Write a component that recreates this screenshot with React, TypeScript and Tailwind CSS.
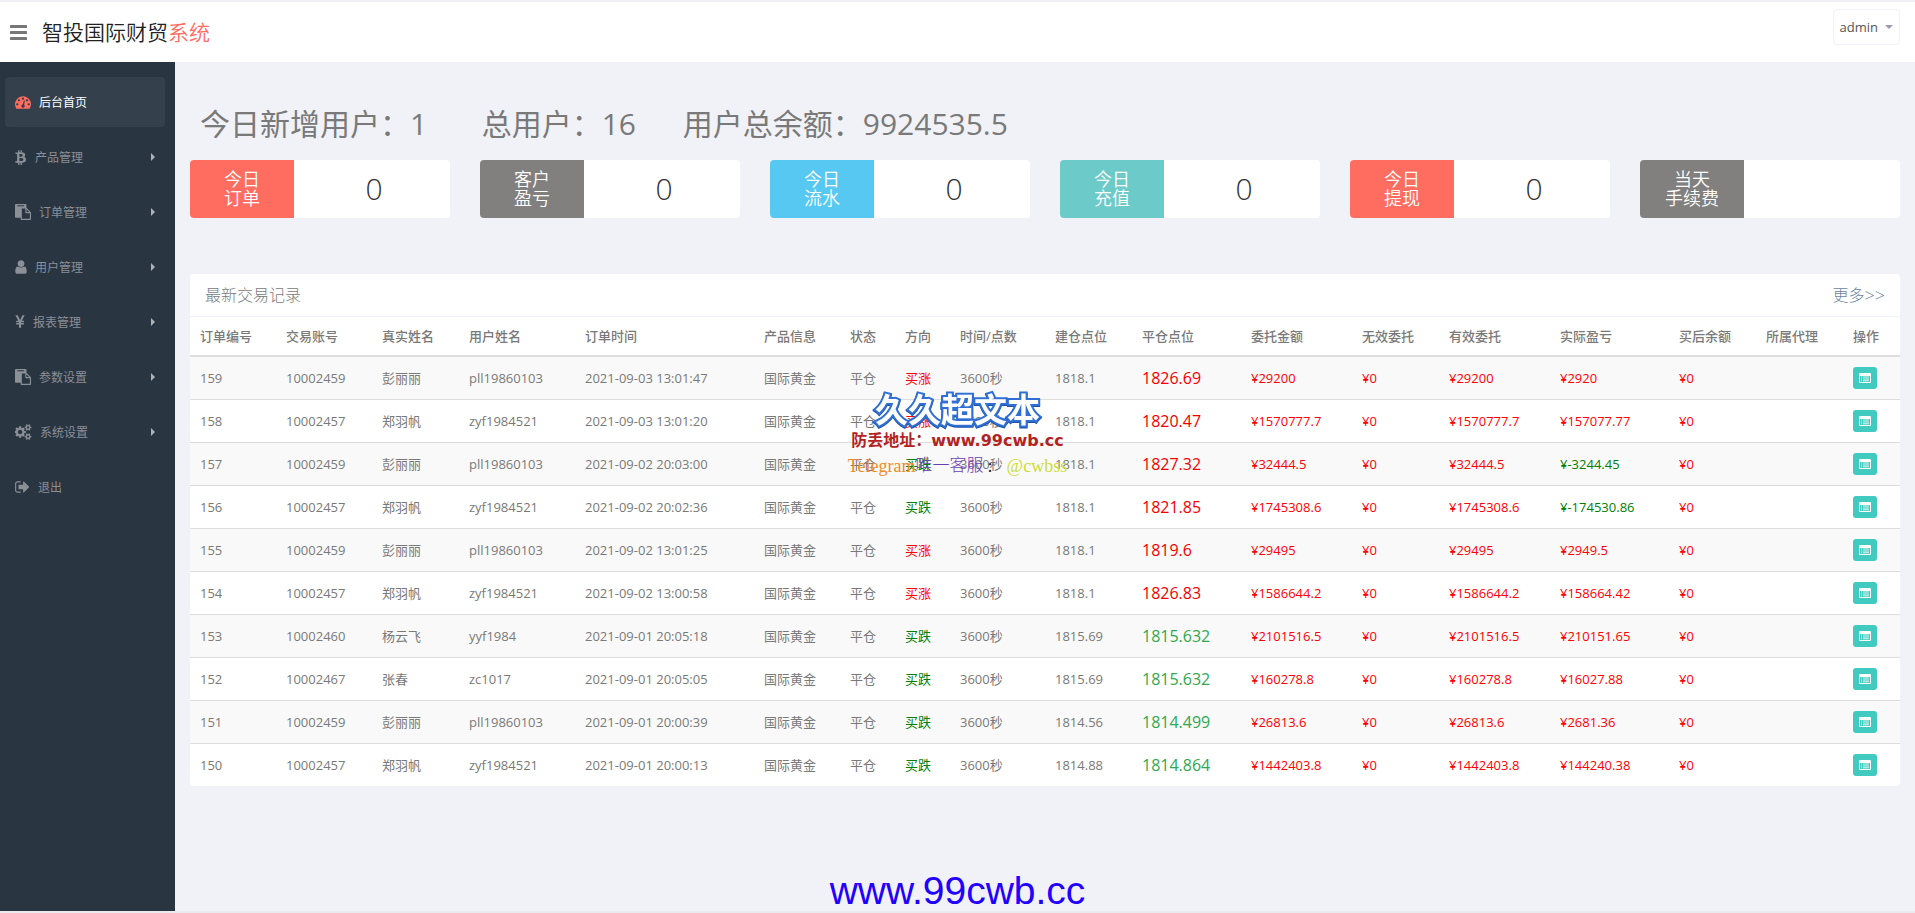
import React from "react";

type IconDef = { box: string; width: string; d: string };

const ICONS: Record<string, IconDef> = {
  dashboard: {
    box: "0 0 1792 1792",
    width: "w-4",
    d: "M384 1152q0-53-37.5-90.5t-90.5-37.5-90.5 37.5-37.5 90.5 37.5 90.5 90.5 37.5 90.5-37.5 37.5-90.5zm192-448q0-53-37.5-90.5t-90.5-37.5-90.5 37.5-37.5 90.5 37.5 90.5 90.5 37.5 90.5-37.5 37.5-90.5zm428 481l101-382q6-26-7.5-48.5t-38.5-29.5-48 6.5-30 39.5l-101 382q-60 5-107 43.5t-63 98.5q-20 77 20 146t117 89 146-20 89-117q16-60-6-117t-72-91zm660-33q0-53-37.5-90.5t-90.5-37.5-90.5 37.5-37.5 90.5 37.5 90.5 90.5 37.5 90.5-37.5 37.5-90.5zm-640-640q0-53-37.5-90.5t-90.5-37.5-90.5 37.5-37.5 90.5 37.5 90.5 90.5 37.5 90.5-37.5 37.5-90.5zm448 192q0-53-37.5-90.5t-90.5-37.5-90.5 37.5-37.5 90.5 37.5 90.5 90.5 37.5 90.5-37.5 37.5-90.5zm320 448q0 261-141 483-19 29-54 29h-1402q-35 0-54-29-141-221-141-483 0-182 71-348t191-286 286-191 348-71 348 71 286 191 191 286 71 348z",
  },
  bitcoin: {
    box: "56 0 1280 1792",
    width: "w-3",
    d: "M1167 640q18 182-131 258 117 28 175 103t45 214q-7 71-32.5 125t-64.5 89-97 58.5-121.5 34.5-145.5 15v255h-154v-251q-80 0-122-1v252h-154v-255q-18 0-54-.5t-55-.5h-200l31-183h111q50 0 58-51v-402h16q-6-1-16-1v-287q-13-68-89-68h-111v-164l212 1q64 0 97-1v-252h154v247q82-2 122-2v-245h154v252q79 7 140 22.5t113 45 82.5 78 36.5 114.5zm-215 545q0-36-15-64t-37-46-57.5-30.5-65.5-18.5-74-9-69-3-64.5 1-47.5 1v338q8 0 37 .5t48 .5 53-1.5 58.5-4 57-8.5 55.5-14 47.5-21 39.5-30 24.5-40 9.5-51zm-71-476q0-33-12.5-58.5t-30.5-42-48-28-55-16.5-61.5-8-58-2.5-54 1-39.5.5v307q5 0 34.5.5t46.5 0 50-2 55-5.5 51.5-11 48.5-18.5 37-27 27-38.5 9-51z",
  },
  paste: {
    box: "0 0 1792 1792",
    width: "w-4",
    d: "M768 1664h896v-640h-416q-40 0-68-28t-28-68v-416h-384v1152zm256-1440v-64q0-13-9.5-22.5t-22.5-9.5h-704q-13 0-22.5 9.5t-9.5 22.5v64q0 13 9.5 22.5t22.5 9.5h704q13 0 22.5-9.5t9.5-22.5zm256 672h299l-299-299v299zm512 128v672q0 40-28 68t-68 28h-960q-40 0-68-28t-28-68v-160h-544q-40 0-68-28t-28-68v-1344q0-40 28-68t68-28h1088q40 0 68 28t28 68v328q21 13 36 28l408 408q28 28 48 76t20 88z",
  },
  user: {
    box: "256 0 1280 1792",
    width: "w-3",
    d: "M1536 1399q0 109-62.5 187t-150.5 78h-854q-88 0-150.5-78t-62.5-187q0-85 8.5-160.5t31.5-152 58.5-131 94-89 134.5-34.5q131 128 313 128t313-128q76 0 134.5 34.5t94 89 58.5 131 31.5 152 8.5 160.5zm-256-887q0 159-112.5 271.5t-271.5 112.5-271.5-112.5-112.5-271.5 112.5-271.5 271.5-112.5 271.5 112.5 112.5 271.5z",
  },
  yen: {
    box: "378 0 1034 1792",
    width: "w-[10px]",
    d: "M985.5 1536h-172q-13 0-22.5-9t-9.5-23v-330h-288q-13 0-22.5-9t-9.5-23v-103q0-13 9.5-22.5t22.5-9.5h288v-85h-288q-13 0-22.5-9t-9.5-23v-104q0-13 9.5-22.5t22.5-9.5h214l-321-578q-8-16 0-32 10-16 28-16h194q19 0 29 18l215 425q19 38 56 125 10-24 30.5-68t27.5-61l191-420q8-19 29-19h191q17 0 27 16 9 14 1 31l-313 579h215q13 0 22.5 9.5t9.5 22.5v104q0 14-9.5 23t-22.5 9h-290v85h290q13 0 22.5 9.5t9.5 22.5v103q0 14-9.5 23t-22.5 9h-290v330q0 13-9.5 22.5t-22.5 9.5z",
  },
  cogs: {
    box: "0 0 1920 1792",
    width: "w-[17px]",
    d: "M832 896q0-106-75-181t-181-75-181 75-75 181 75 181 181 75 181-75 75-181zm768 512q0-52-38-90t-90-38-90 38-38 90q0 53 37.5 90.5t90.5 37.5 90.5-37.5 37.5-90.5zm0-1024q0-52-38-90t-90-38-90 38-38 90q0 53 37.5 90.5t90.5 37.5 90.5-37.5 37.5-90.5zm-384 421v185q0 10-7 19.5t-16 10.5l-155 24q-11 35-32 76 34 48 90 115 7 10 7 20 0 12-7 19-23 30-82.5 89.5t-78.5 59.5q-11 0-21-7l-115-90q-37 19-77 31-11 108-23 155-7 24-30 24h-186q-11 0-20-7.5t-10-17.5l-23-153q-34-10-75-31l-118 89q-7 7-20 7-11 0-21-8-144-133-144-160 0-9 7-19 10-14 41-53t47-61q-23-44-35-82l-152-24q-10-1-17-9.5t-7-19.5v-185q0-10 7-19.5t16-10.5l155-24q11-35 32-76-34-48-90-115-7-11-7-20 0-12 7-20 22-30 82-89t79-59q11 0 21 7l115 90q34-18 77-32 11-108 23-154 7-24 30-24h186q11 0 20 7.5t10 17.5l23 153q34 10 75 31l118-89q8-7 20-7 11 0 21 8 144 133 144 160 0 9-7 19-12 16-42 54t-45 60q23 48 34 82l152 23q10 2 17 10.5t7 19.5zm640 533v140q0 16-149 31-12 27-30 52 51 113 51 138 0 4-4 7-122 71-124 71-8 0-46-47t-52-68q-20 2-30 2t-30-2q-14 21-52 68t-46 47q-2 0-124-71-4-3-4-7 0-25 51-138-18-25-30-52-149-15-149-31v-140q0-16 149-31 13-29 30-52-51-113-51-138 0-4 4-7 4-2 35-20t59-34 30-16q8 0 46 46.5t52 67.5q20-2 30-2t30 2q51-71 92-112l6-2q4 0 124 70 4 3 4 7 0 25-51 138 17 23 30 52 149 15 149 31zm0-1024v140q0 16-149 31-12 27-30 52 51 113 51 138 0 4-4 7-122 71-124 71-8 0-46-47t-52-68q-20 2-30 2t-30-2q-14 21-52 68t-46 47q-2 0-124-71-4-3-4-7 0-25 51-138-18-25-30-52-149-15-149-31v-140q0-16 149-31 13-29 30-52-51-113-51-138 0-4 4-7 4-2 35-20t59-34 30-16q8 0 46 46.5t52 67.5q20-2 30-2t30 2q51-71 92-112l6-2q4 0 124 70 4 3 4 7 0 25-51 138 17 23 30 52 149 15 149 31z",
  },
  signOut: {
    box: "64 0 1664 1792",
    width: "w-[15px]",
    d: "M704 1440q0 4 1 20t.5 26.5-3 23.5-10 19.5-20.5 6.5h-320q-119 0-203.5-84.5t-84.5-203.5v-704q0-119 84.5-203.5t203.5-84.5h320q13 0 22.5 9.5t9.5 22.5q0 4 1 20t.5 26.5-3 23.5-10 19.5-20.5 6.5h-320q-66 0-113 47t-47 113v704q0 66 47 113t113 47h312l11.5 1 11.5 3 8 5.5 7 9 2 13.5zm928-544q0 26-19 45l-544 544q-19 19-45 19t-45-19-19-45v-288h-448q-26 0-45-19t-19-45v-384q0-26 19-45t45-19h448v-288q0-26 19-45t45-19 45 19l544 544q19 19 19 45z",
  },
};

function Icon({ name }: { name: string }) {
  const icon = ICONS[name];
  return (
    <svg viewBox={icon.box} className={`h-4 shrink-0 ${icon.width}`} fill="currentColor" aria-hidden="true">
      <path d={icon.d} />
    </svg>
  );
}

const MENU = [
  { icon: "dashboard", label: "后台首页", active: true, more: false },
  { icon: "bitcoin", label: "产品管理", active: false, more: true },
  { icon: "paste", label: "订单管理", active: false, more: true },
  { icon: "user", label: "用户管理", active: false, more: true },
  { icon: "yen", label: "报表管理", active: false, more: true },
  { icon: "paste", label: "参数设置", active: false, more: true },
  { icon: "cogs", label: "系统设置", active: false, more: true },
  { icon: "signOut", label: "退出", active: false, more: false },
];

const SUMMARY = ["今日新增用户：1", "总用户：16", "用户总余额：9924535.5"];

const CARDS = [
  { top: "今日", bottom: "订单", value: "0", color: "bg-[#ff6c60]" },
  { top: "客户", bottom: "盈亏", value: "0", color: "bg-[#81807e]" },
  { top: "今日", bottom: "流水", value: "0", color: "bg-[#57c8f2]" },
  { top: "今日", bottom: "充值", value: "0", color: "bg-[#6ccac9]" },
  { top: "今日", bottom: "提现", value: "0", color: "bg-[#ff6c60]" },
  { top: "当天", bottom: "手续费", value: "", color: "bg-[#81807e]" },
];

const COLUMNS = [
  { title: "订单编号", width: "w-[86px]" },
  { title: "交易账号", width: "w-[96px]" },
  { title: "真实姓名", width: "w-[87px]" },
  { title: "用户姓名", width: "w-[116px]" },
  { title: "订单时间", width: "w-[179px]" },
  { title: "产品信息", width: "w-[86px]" },
  { title: "状态", width: "w-[55px]" },
  { title: "方向", width: "w-[55px]" },
  { title: "时间/点数", width: "w-[95px]" },
  { title: "建仓点位", width: "w-[87px]" },
  { title: "平仓点位", width: "w-[109px]" },
  { title: "委托金额", width: "w-[111px]" },
  { title: "无效委托", width: "w-[87px]" },
  { title: "有效委托", width: "w-[111px]" },
  { title: "实际盈亏", width: "w-[119px]" },
  { title: "买后余额", width: "w-[87px]" },
  { title: "所属代理", width: "w-[87px]" },
  { title: "操作", width: "w-[57px]" },
];

type Order = {
  id: string;
  account: string;
  name: string;
  user: string;
  time: string;
  up: boolean;
  open: string;
  close: string;
  rose: boolean;
  amount: string;
  profit: string;
};

const ORDERS: Order[] = [
  { id: "159", account: "10002459", name: "彭丽丽", user: "pll19860103", time: "2021-09-03 13:01:47", up: true, open: "1818.1", close: "1826.69", rose: true, amount: "29200", profit: "2920" },
  { id: "158", account: "10002457", name: "郑羽帆", user: "zyf1984521", time: "2021-09-03 13:01:20", up: true, open: "1818.1", close: "1820.47", rose: true, amount: "1570777.7", profit: "157077.77" },
  { id: "157", account: "10002459", name: "彭丽丽", user: "pll19860103", time: "2021-09-02 20:03:00", up: false, open: "1818.1", close: "1827.32", rose: true, amount: "32444.5", profit: "-3244.45" },
  { id: "156", account: "10002457", name: "郑羽帆", user: "zyf1984521", time: "2021-09-02 20:02:36", up: false, open: "1818.1", close: "1821.85", rose: true, amount: "1745308.6", profit: "-174530.86" },
  { id: "155", account: "10002459", name: "彭丽丽", user: "pll19860103", time: "2021-09-02 13:01:25", up: true, open: "1818.1", close: "1819.6", rose: true, amount: "29495", profit: "2949.5" },
  { id: "154", account: "10002457", name: "郑羽帆", user: "zyf1984521", time: "2021-09-02 13:00:58", up: true, open: "1818.1", close: "1826.83", rose: true, amount: "1586644.2", profit: "158664.42" },
  { id: "153", account: "10002460", name: "杨云飞", user: "yyf1984", time: "2021-09-01 20:05:18", up: false, open: "1815.69", close: "1815.632", rose: false, amount: "2101516.5", profit: "210151.65" },
  { id: "152", account: "10002467", name: "张春", user: "zc1017", time: "2021-09-01 20:05:05", up: false, open: "1815.69", close: "1815.632", rose: false, amount: "160278.8", profit: "16027.88" },
  { id: "151", account: "10002459", name: "彭丽丽", user: "pll19860103", time: "2021-09-01 20:00:39", up: false, open: "1814.56", close: "1814.499", rose: false, amount: "26813.6", profit: "2681.36" },
  { id: "150", account: "10002457", name: "郑羽帆", user: "zyf1984521", time: "2021-09-01 20:00:13", up: false, open: "1814.88", close: "1814.864", rose: false, amount: "1442403.8", profit: "144240.38" },
];

function Header() {
  return (
    <header className="flex h-[61px] items-start justify-between border-t border-[#eeeeee] bg-white pr-[15px] pl-[10px]">
      <div className="flex h-[60px] items-center gap-[15px]">
        <button type="button" aria-label="切换菜单" className="text-[#777777]">
          <svg viewBox="0 0 17 15" className="h-[15px] w-[17px]" fill="currentColor" aria-hidden="true">
            <rect x="0" y="0" width="17" height="3" rx="0.6" />
            <rect x="0" y="6" width="17" height="3" rx="0.6" />
            <rect x="0" y="12" width="17" height="3" rx="0.6" />
          </svg>
        </button>
        <a href="#" className="text-[21px] leading-6 font-[350] text-[#222222]">
          智投国际财贸<span className="text-[#ff6c60]">系统</span>
        </a>
      </div>
      <button
        type="button"
        className="mt-[7px] flex h-9 items-center gap-[7px] rounded border border-[#f1f2f7] px-[6px] text-[13px] text-[#555555]"
      >
        admin
        <svg viewBox="0 0 8 4" className="h-1 w-2" fill="#999caa" aria-hidden="true">
          <path d="M0 0h8L4 4z" />
        </svg>
      </button>
    </header>
  );
}

function Sidebar() {
  return (
    <aside className="w-[175px] shrink-0 bg-[#2a3542] pt-[15px]">
      <nav>
        <ul className="flex flex-col gap-[5px] pr-[10px] pl-[5px]">
          {MENU.map((item) => (
            <li key={item.label}>
              <a
                href="#"
                className={`flex h-[50px] items-center gap-2 rounded px-[10px] text-xs ${
                  item.active ? "bg-[#35404d] text-white" : "text-[#8b8f96]"
                }`}
              >
                <span className={item.active ? "text-[#ff6c60]" : "text-[#8b8f96]"}>
                  <Icon name={item.icon} />
                </span>
                <span className="grow pt-[2px]">{item.label}</span>
                {item.more && (
                  <svg viewBox="0 0 4 8" className="h-2 w-1" fill="#aeb2b7" aria-hidden="true">
                    <path d="M0 0l4 4-4 4z" />
                  </svg>
                )}
              </a>
            </li>
          ))}
        </ul>
      </nav>
    </aside>
  );
}

function OrderRow({ order }: { order: Order }) {
  const cell = "h-[43px] border-b border-[#dddddd] px-[10px] group-last:h-[42px] group-last:border-b-0";
  const red = "text-[#ff0000]";
  const green = "text-[#008000]";
  return (
    <tr className="group odd:bg-[#f9f9f9]">
      <td className={cell}>{order.id}</td>
      <td className={cell}>{order.account}</td>
      <td className={cell}>{order.name}</td>
      <td className={cell}>{order.user}</td>
      <td className={cell}>{order.time}</td>
      <td className={cell}>国际黄金</td>
      <td className={cell}>平仓</td>
      <td className={`${cell} ${order.up ? red : green}`}>{order.up ? "买涨" : "买跌"}</td>
      <td className={cell}>3600秒</td>
      <td className={cell}>{order.open}</td>
      <td className={`${cell} text-base leading-5 ${order.rose ? "text-[#f50000]" : "text-[#2fa84f]"}`}>{order.close}</td>
      <td className={`${cell} ${red}`}>¥{order.amount}</td>
      <td className={`${cell} ${red}`}>¥0</td>
      <td className={`${cell} ${red}`}>¥{order.amount}</td>
      <td className={`${cell} ${order.profit.startsWith("-") ? green : red}`}>¥{order.profit}</td>
      <td className={`${cell} ${red}`}>¥0</td>
      <td className={cell}></td>
      <td className={cell}>
        <button
          type="button"
          aria-label="查看"
          className="flex h-[22px] w-6 items-center justify-center rounded-[3px] bg-[#41cac0] text-white"
        >
          <svg viewBox="0 0 12 10" className="h-[10px] w-3" fill="currentColor" aria-hidden="true">
            <path fillRule="evenodd" d="M1 0h10a1 1 0 0 1 1 1v8a1 1 0 0 1-1 1H1a1 1 0 0 1-1-1V1a1 1 0 0 1 1-1zM1 3v6h10V3z" />
            <path opacity=".8" d="M2 3.6h1v1H2zM4 3.6h6v1H4zM2 5.4h1v1H2zM4 5.4h6v1H4zM2 7.2h1v1H2zM4 7.2h6v1H4z" />
          </svg>
        </button>
      </td>
    </tr>
  );
}

function OrdersPanel() {
  return (
    <section className="mt-14 overflow-hidden rounded bg-white">
      <div className="flex h-[43px] items-center justify-between border-b border-[#eff2f7] px-[15px] text-base leading-5 font-light">
        <h2>最新交易记录</h2>
        <a href="#" className="flex items-center text-[#6b85a3]">
          更多<span className="text-lg leading-5">&gt;&gt;</span>
        </a>
      </div>
      <table className="w-full table-fixed border-separate border-spacing-0 text-left whitespace-nowrap">
        <colgroup>
          {COLUMNS.map((column) => (
            <col key={column.title} className={column.width} />
          ))}
        </colgroup>
        <thead>
          <tr>
            {COLUMNS.map((column) => (
              <th key={column.title} className="h-10 border-b-2 border-[#dddddd] px-[10px] font-medium">
                {column.title}
              </th>
            ))}
          </tr>
        </thead>
        <tbody>
          {ORDERS.map((order) => (
            <OrderRow key={order.id} order={order} />
          ))}
        </tbody>
      </table>
    </section>
  );
}

function Watermark() {
  return (
    <div className="pointer-events-none absolute top-[388px] left-1/2 flex -translate-x-1/2 flex-col items-center whitespace-nowrap">
      <p className="text-[33px] leading-[44px] font-bold text-white drop-shadow-[0_1px_0_#1b4fa0] [-webkit-text-stroke:4px_#2f6fd6] [paint-order:stroke_fill]">
        久久超文本
      </p>
      <p className="font-['DejaVu_Sans','Noto_Sans_CJK_SC',sans-serif] text-base leading-[18px] font-bold text-[#b22222]">
        防丢地址：www.99cwb.cc
      </p>
      <p className="flex items-center pt-1 font-['Liberation_Serif','Noto_Sans_CJK_SC',serif] text-lg leading-6">
        <span className="text-[#f08a24]">Telegram</span>
        <span className="text-[17px] font-light text-[#6a3fb5]">唯一客服</span>
        <span className="pr-[14px] pl-1 text-[#222222]">:</span>
        <span className="text-[#cddc39]">@cwbss</span>
      </p>
    </div>
  );
}

export default function App() {
  return (
    <div className="relative flex min-h-screen flex-col bg-[#f1f2f7] pt-px font-['Open_Sans','Noto_Sans_CJK_SC',sans-serif] text-[13px] leading-[18px] text-[#797979]">
      <Header />
      <div className="flex grow border-b-2 border-[#e9eaee]">
        <Sidebar />
        <main className="min-w-0 grow px-[15px] pt-[34px]">
          <h1 className="px-[10px] pt-2 pb-4 text-[30px] leading-10">
            {SUMMARY[0]}
            {"\u00a0".repeat(7)}
            {SUMMARY[1]}
            {"\u00a0".repeat(6)}
            {SUMMARY[2]}
          </h1>
          <div className="grid grid-cols-6 gap-[30px]">
            {CARDS.map((card) => (
              <section key={card.top + card.bottom} className="flex h-[58px] overflow-hidden rounded bg-white">
                <div className={`flex w-2/5 flex-col items-center justify-center text-lg leading-[19px] font-[350] text-white ${card.color}`}>
                  <span>{card.top}</span>
                  <span>{card.bottom}</span>
                </div>
                <div className="flex w-3/5 items-center justify-center pl-1 text-[30px] leading-10 font-light text-[#333333]">
                  {card.value}
                </div>
              </section>
            ))}
          </div>
          <OrdersPanel />
        </main>
      </div>
      <Watermark />
      <p className="pointer-events-none absolute bottom-0 left-1/2 -translate-x-1/2 font-['Liberation_Sans',sans-serif] text-[39px] leading-[44px] text-[#2200ff]">
        www.99cwb.cc
      </p>
    </div>
  );
}
